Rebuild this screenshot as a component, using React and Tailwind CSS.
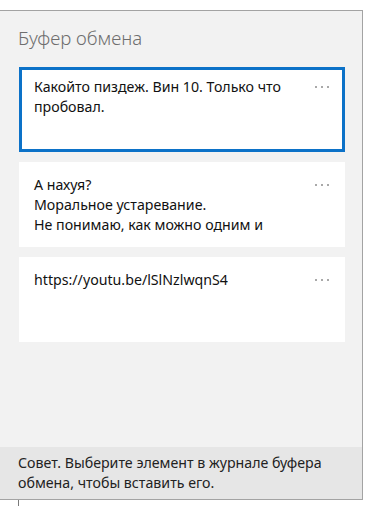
import React from 'react';

const clips = [
  { id: 1, lines: ['Какойто пиздеж. Вин 10. Только что', 'пробовал.'], selected: true },
  { id: 2, lines: ['А нахуя?', 'Моральное устаревание.', 'Не понимаю, как можно одним и'] },
  { id: 3, lines: ['https://youtu.be/lSlNzlwqnS4'] },
];

const Dots = () => (
  <div className="flex gap-[4px] pt-[9px] pr-[13px]">
    <span className="w-[2px] h-[2px] rounded-full bg-[#8c8c8c]" />
    <span className="w-[2px] h-[2px] rounded-full bg-[#8c8c8c]" />
    <span className="w-[2px] h-[2px] rounded-full bg-[#8c8c8c]" />
  </div>
);

const ClipCard = ({ clip }) => (
  <div
    className={`flex items-start justify-between h-[85px] bg-white border-[3px] ${
      clip.selected ? 'border-[#0c72c8] pt-[7px]' : 'border-white pt-[10px]'
    }`}
  >
    <div className="pl-[12px] text-[14.2px] leading-[20px] text-[#111] whitespace-nowrap overflow-hidden">
      {clip.lines.map((line, i) => (
        <div key={i}>{line}</div>
      ))}
    </div>
    <Dots />
  </div>
);

export default function App() {
  return (
    <div
      className="w-[365px] h-[506px] bg-white pt-[10px] overflow-hidden"
      style={{ fontFamily: '"Noto Sans", "Open Sans", sans-serif' }}
    >
      <div className="flex flex-col w-[363px] h-[490px] bg-[#f2f2f2] border-t border-r border-b border-[#a3a3a3]">
        {/* Header */}
        <div className="pl-[18px] pt-[14px] text-[18.6px] leading-[26px] font-light text-[#6e6e6e]">
          Буфер обмена
        </div>

        {/* Clipboard history */}
        <div className="flex flex-col gap-[10px] mt-[16px] ml-[19px] w-[326px]">
          {clips.map((clip) => (
            <ClipCard key={clip.id} clip={clip} />
          ))}
        </div>

        {/* Tip */}
        <div className="mt-auto h-[52px] bg-[#e6e6e6] pl-[18px] pt-[6px] text-[14.2px] leading-[20px] text-[#222]">
          Совет. Выберите элемент в журнале буфера
          <br />
          обмена, чтобы вставить его.
        </div>
      </div>
      <div className="ml-[18px] w-px h-[7px] bg-[#7a7a7a]" />
    </div>
  );
}
